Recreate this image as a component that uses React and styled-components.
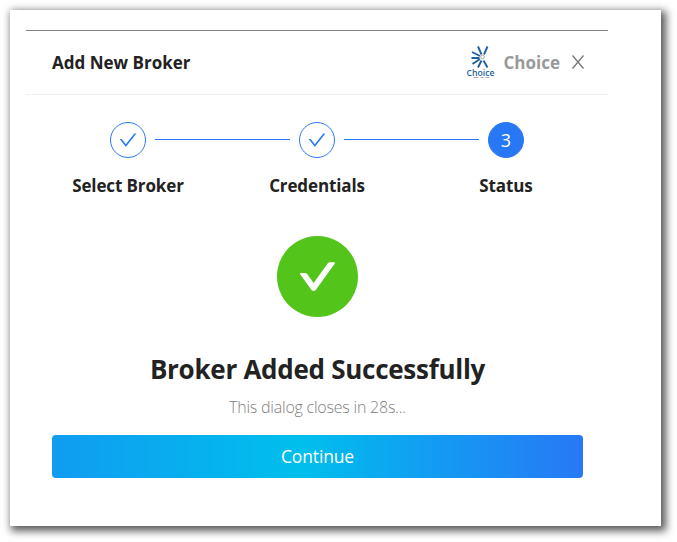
import React from "react";
import styled, { createGlobalStyle } from "styled-components";

const GlobalStyle = createGlobalStyle`
  * { box-sizing: border-box; }
  body {
    margin: 0;
    background: #fff;
    color: #222;
    font-family: "Open Sans", "Noto Sans", sans-serif;
  }
`;

const Page = styled.div`
  height: 100vh;
  padding: 10px;
  overflow: hidden;
`;

const Card = styled.main`
  width: 651px;
  height: 516px;
  padding: 20px 53px 0 16px;
  background: #fff;
  box-shadow: 3px 3px 8px 2px rgba(0, 0, 0, 0.65);
`;

const Dialog = styled.section`
  width: 582px;
  border-top: 1px solid #838383;
`;

const Header = styled.header`
  display: flex;
  align-items: center;
  height: 64px;
  padding: 0 23px 0 26px;
  border-bottom: 1px solid #f0f0f0;
`;

const Label = styled.span`
  font-size: 17px;
  line-height: 24px;
  font-weight: 700;
  white-space: nowrap;
  letter-spacing: ${(p) => p.$spacing || "-0.12px"};
`;

const Brand = styled.div`
  display: flex;
  align-items: center;
  margin-left: auto;
  color: #999;
`;

const BrandLogo = styled.svg`
  width: 30px;
  height: 34px;
  margin-right: 7px;
`;

const CloseButton = styled.button`
  display: flex;
  width: 14px;
  height: 14px;
  margin: 0 0 2px 11px;
  padding: 0;
  border: 0;
  background: none;
  color: #777;
`;

const StepTrack = styled.div`
  display: grid;
  grid-template-columns: 36px 1fr 36px 1fr 36px;
  align-items: center;
  padding: 27px 84px 0 84px;
`;

const StepCircle = styled.div`
  display: flex;
  align-items: center;
  justify-content: center;
  width: 36px;
  height: 36px;
  border: 1px solid #2878f5;
  border-radius: 50%;
  font-size: 18px;
  color: ${(p) => (p.$active ? "#fff" : "#2878f5")};
  background: ${(p) => (p.$active ? "#2878f5" : "#fff")};
`;

const Connector = styled.div`
  height: 1px;
  margin: -1px 9px 0;
  background: #2878f5;
`;

const StepLabels = styled.div`
  display: grid;
  grid-template-columns: repeat(3, 189px);
  justify-content: center;
  justify-items: center;
  margin-top: 16px;
`;

const Result = styled.div`
  display: flex;
  flex-direction: column;
  align-items: center;
  padding: 38px 25px 0 26px;
`;

const Title = styled.h1`
  margin: 33px 0 0;
  font-size: 26px;
  line-height: 38px;
  font-weight: 700;
  white-space: nowrap;
  letter-spacing: -0.27px;
`;

const Countdown = styled.p`
  margin: 7px 0 0;
  font-size: 16px;
  line-height: 24px;
  font-weight: 300;
  letter-spacing: -0.22px;
  color: #808080;
  white-space: nowrap;
`;

const ContinueButton = styled.button`
  width: 100%;
  height: 43px;
  margin-top: 16px;
  padding: 0 0 1px;
  border: 0;
  border-radius: 4px;
  background: linear-gradient(90deg, #109cf1 0%, #00bfec 47%, #149af3 73%, #2878f5 100%);
  color: #fff;
  font: 400 17.5px "Open Sans", sans-serif;
  letter-spacing: -0.15px;
`;

const CheckIcon = () => (
  <svg width="18" height="18" viewBox="64 64 896 896" fill="currentColor">
    <path d="M912 190h-69.9c-9.8 0-19.1 4.5-25.1 12.2L404.7 724.5 207 474a32 32 0 00-25.1-12.2H112c-6.7 0-10.4 7.7-6.3 12.9l273.9 347c12.8 16.2 37.4 16.2 50.3 0l488.4-618.9c4.1-5.1.4-12.8-6.3-12.8z" />
  </svg>
);

const SuccessIcon = () => (
  <svg width="81" height="81" viewBox="64 64 896 896" fill="#52c41a">
    <path d="M512 64C264.6 64 64 264.6 64 512s200.6 448 448 448 448-200.6 448-448S759.4 64 512 64zm193.5 301.7l-210.6 292a31.8 31.8 0 01-51.7 0L318.5 484.9c-3.8-5.3 0-12.7 6.5-12.7h46.9c10.2 0 19.9 4.9 25.9 13.3l71.2 98.8 157.2-218c6-8.3 15.6-13.3 25.9-13.3H699c6.5 0 10.3 7.4 6.5 12.7z" />
  </svg>
);

const ChoiceLogo = () => (
  <BrandLogo viewBox="0 0 30 34">
    <g stroke="#1f5f9f" strokeWidth="1.9" fill="none">
      <path d="M12 0.5l3.5 8M21.5 0.5l-3.5 8M6 6l8 4M5.5 12h8M6.500 18l7.500-5M12 21.500l3.500-7M17.500 14.500l4 7" />
    </g>
    <circle cx="16.5" cy="11" r="1.8" fill="#fff" stroke="#aaa79c" strokeWidth="1" />
    <text x="0.5" y="30" textLength="28" lengthAdjust="spacingAndGlyphs" fontFamily="Open Sans" fontSize="8.5" fontWeight="600" fill="#1f5f9f">Choice</text>
    <path d="M7.5 31.5h5M14.5 31.5h3M19.5 31.5h4" stroke="#aaa" strokeWidth="1" />
  </BrandLogo>
);

export default function App() {
  return (
    <Page>
      <GlobalStyle />
      <Card>
        <Dialog>
          <Header>
            <Label $spacing="0">Add New Broker</Label>
            <Brand>
              <ChoiceLogo />
              <Label $spacing="0">Choice</Label>
              <CloseButton aria-label="Close">
                <svg width="14" height="14" viewBox="0 0 14 14" stroke="currentColor" strokeWidth="1.3">
                  <path d="M1.5 0.5l11 13M12.5 0.5l-11 13" />
                </svg>
              </CloseButton>
            </Brand>
          </Header>
          <StepTrack>
            <StepCircle><CheckIcon /></StepCircle>
            <Connector />
            <StepCircle><CheckIcon /></StepCircle>
            <Connector />
            <StepCircle $active>3</StepCircle>
          </StepTrack>
          <StepLabels>
            <Label>Select Broker</Label>
            <Label>Credentials</Label>
            <Label>Status</Label>
          </StepLabels>
          <Result>
            <SuccessIcon />
            <Title>Broker Added Successfully</Title>
            <Countdown>This dialog closes in 28s...</Countdown>
            <ContinueButton>Continue</ContinueButton>
          </Result>
        </Dialog>
      </Card>
    </Page>
  );
}
